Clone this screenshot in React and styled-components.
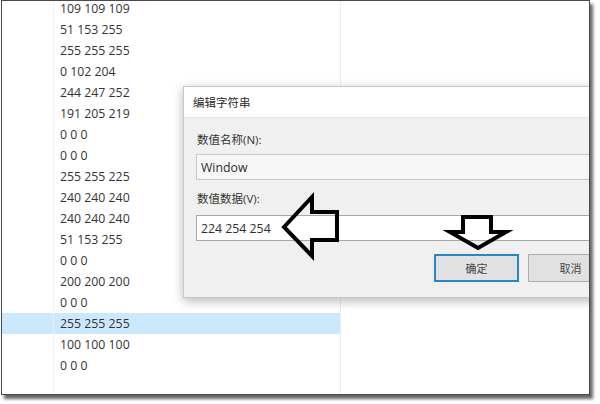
import styled, { createGlobalStyle } from "styled-components";

const GlobalStyle = createGlobalStyle`
  html, body {
    margin: 0;
    padding: 0;
    background: #ffffff;
  }
  body {
    font-family: "Open Sans", "Noto Sans CJK SC", sans-serif;
    width: 600px;
    height: 404px;
    overflow: hidden;
  }
`;

const Page = styled.div`
  width: 600px;
  height: 404px;
  padding: 0 0 0 1px;
  box-sizing: border-box;
`;

const Frame = styled.div`
  position: relative;
  width: 589px;
  height: 395px;
  box-sizing: border-box;
  border: 1px solid #4a4a4a;
  background: #ffffff;
  overflow: hidden;
  box-shadow: 3px 4px 3px rgba(0, 0, 0, 0.6);
`;

const List = styled.div`
  display: grid;
  grid-template-columns: 52px 287px 1fr;
  margin-top: -3px;
  height: 400px;
`;

const Column = styled.div`
  display: flex;
  flex-direction: column;
  border-right: 1px solid ${(p) => p.$line || "transparent"};
`;

const Row = styled.div`
  height: 21px;
  display: flex;
  align-items: center;
  padding-left: ${(p) => p.$pad || 0}px;
  font-size: 12.3px;
  color: #333;
  background: ${(p) => (p.$selected ? "#cce8ff" : "transparent")};
  white-space: nowrap;
`;

const Dialog = styled.div`
  position: absolute;
  left: 181px;
  top: 85px;
  width: 440px;
  height: 210px;
  display: flex;
  flex-direction: column;
  border: 1px solid #c9c9c9;
  background: #f0f0f0;
  box-shadow: 0 3px 10px rgba(0, 0, 0, 0.28);
`;

const TitleBar = styled.div`
  height: 30px;
  display: flex;
  align-items: center;
  padding-left: 9px;
  background: #ffffff;
  border-bottom: 1px solid #e2e2e2;
  font-family: "Noto Sans CJK SC", sans-serif;
  font-size: 11.5px;
  color: #2a2a2a;
`;

const Body = styled.div`
  flex: 1;
  display: flex;
  flex-direction: column;
  padding: 14px 12px 0 12px;
`;

const Label = styled.div`
  height: 16px;
  line-height: 16px;
  padding-left: 1px;
  margin-top: ${(p) => p.$top || 0}px;
  font-family: "Open Sans", "Noto Sans CJK SC", sans-serif;
  font-size: 11.5px;
  color: #333;
`;

const Field = styled.div`
  height: 26px;
  margin-top: ${(p) => p.$top || 0}px;
  box-sizing: border-box;
  display: flex;
  align-items: center;
  padding-left: 4px;
  border: 1px solid ${(p) => (p.$active ? "#a8a8a8" : "#c8c8c8")};
  background: ${(p) => (p.$active ? "#ffffff" : "#f6f6f6")};
  font-size: 12.3px;
  color: #2e2e2e;
`;

const Buttons = styled.div`
  display: flex;
  justify-content: flex-end;
  gap: 9px;
  margin-top: 13px;
  margin-right: -1px;
`;

const Button = styled.div`
  width: 85px;
  height: 28px;
  box-sizing: border-box;
  display: flex;
  align-items: center;
  justify-content: center;
  background: #e1e1e1;
  border: ${(p) => (p.$default ? "2px solid #2a84c8" : "1px solid #adadad")};
  font-family: "Noto Sans CJK SC", sans-serif;
  font-size: 11px;
  color: #444;
`;

const Arrow = styled.svg`
  position: absolute;
  left: 0;
  top: 0;
  pointer-events: none;
`;

const values = [
  "109 109 109",
  "51 153 255",
  "255 255 255",
  "0 102 204",
  "244 247 252",
  "191 205 219",
  "0 0 0",
  "0 0 0",
  "255 255 225",
  "240 240 240",
  "240 240 240",
  "51 153 255",
  "0 0 0",
  "200 200 200",
  "0 0 0",
  "255 255 255",
  "100 100 100",
  "0 0 0",
  "",
];

const SELECTED = 15;

const App = () => {
  return (
    <Page>
      <GlobalStyle />
      <Frame>
        <List>
          <Column $line="#f1f1f1">
            {values.map((v, i) => (
              <Row key={i} $selected={i === SELECTED} />
            ))}
          </Column>
          <Column $line="#ececec">
            {values.map((v, i) => (
              <Row key={i} $pad={6} $selected={i === SELECTED}>
                {v}
              </Row>
            ))}
          </Column>
          <Column />
        </List>

        <Dialog>
          <TitleBar>编辑字符串</TitleBar>
          <Body>
            <Label>数值名称(N):</Label>
            <Field $top={6}>Window</Field>
            <Label $top={11}>数值数据(V):</Label>
            <Field $top={8} $active>
              224 254 254
            </Field>
            <Buttons>
              <Button $default>确定</Button>
              <Button>取消</Button>
            </Buttons>
          </Body>
        </Dialog>

        <Arrow width="589" height="395" viewBox="0 0 589 395">
          <polygon
            points="282,226 310,196 310,211 335,211 335,239 310,239 310,255"
            fill="none"
            stroke="#000"
            strokeWidth="4"
            strokeLinejoin="miter"
          />
          <polygon
            points="461,216 489,216 489,231 504,231 476,247 448,231 461,231"
            fill="none"
            stroke="#000"
            strokeWidth="4"
            strokeLinejoin="miter"
          />
        </Arrow>
      </Frame>
    </Page>
  );
};

export default App;
